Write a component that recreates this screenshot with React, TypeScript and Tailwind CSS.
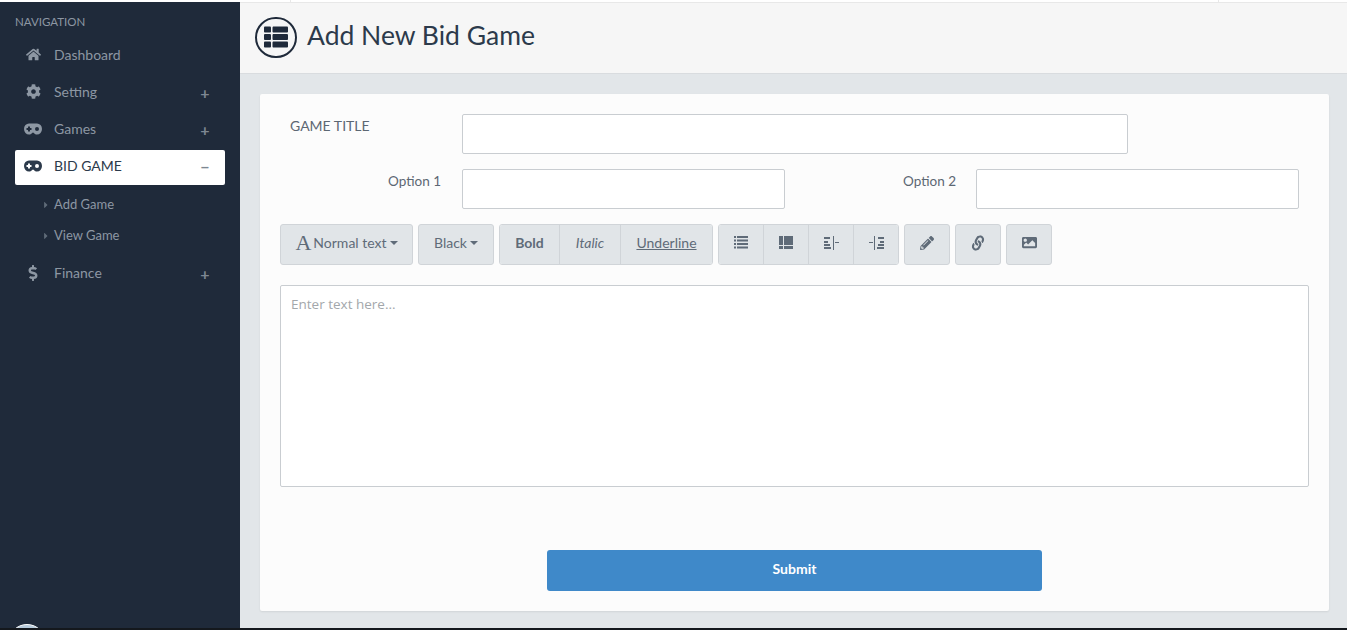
import React from 'react';
import { FaHome, FaCog, FaDollarSign, FaThList, FaPencilAlt, FaLink, FaImage, FaCaretRight } from 'react-icons/fa';

const btn = 'h-full flex items-center justify-center bg-[#e1e5e8] text-[#5f6b78] text-[14px] pb-[4px]';

const GamepadIcon = () => (
  <svg width="18" height="12" viewBox="0 0 18 12" fill="currentColor" fillRule="evenodd">
    <path d="M5 .5h8a5 5.5 0 0 1 0 11c-1.600 0-2.600-.8-3.200-1.800H8.200C7.600 10.700 6.600 11.500 5 11.500a5 5.500 0 0 1 0-11zM4 3.500h2V5h1.500v2H6v1.500H4V7H2.500V5H4zM13 4a2 2 0 1 0 0 4 2 2 0 0 0 0-4z" />
  </svg>
);

const NavItem: React.FC<{ icon: React.ReactNode; label: string; sign?: string; active?: boolean; top?: string }> = ({ icon, label, sign, active, top }) => (
  <div className={`h-[35px] ml-[15px] w-[210px] flex items-center rounded-[2px] ${top ?? 'mt-[2px]'} ${active ? 'bg-white text-[#2c3a4b]' : 'text-[#8d97a3]'}`}>
    <span className="w-[36px] flex justify-center text-[15px] pb-[4px]">{icon}</span>
    <span className="ml-[3px] flex-1 text-[14px] leading-none pb-[4px]">{label}</span>
    {sign && <span className="w-[40px] text-center text-[16px] font-bold text-[#7d8792] pb-[1px] leading-none">{sign}</span>}
  </div>
);

const IndentIcon: React.FC<{ flip?: boolean }> = ({ flip }) => (
  <svg width="15" height="14" viewBox="0 0 15 14" fill="#5f6b78" className={flip ? '-scale-x-100' : ''}>
    <rect x="0" y="1" width="6" height="2" />
    <rect x="0" y="5" width="4" height="2" />
    <rect x="0" y="8" width="6" height="2" />
    <rect x="0" y="11" width="7" height="2" />
    <rect x="9" y="0" width="1" height="14" />
    <rect x="11" y="6" width="4" height="1" />
  </svg>
);

const ListIcon = () => (
  <svg width="14" height="13" viewBox="0 0 14 13" fill="#5f6b78">
    <rect x="0" y="0" width="2" height="2" />
    <rect x="3" y="0" width="11" height="2" />
    <rect x="0" y="3.500" width="2" height="2" />
    <rect x="3" y="3.500" width="11" height="2" />
    <rect x="0" y="7" width="2" height="2" />
    <rect x="3" y="7" width="11" height="2" />
    <rect x="0" y="10.500" width="2" height="2" />
    <rect x="3" y="10.500" width="11" height="2" />
  </svg>
);

const BlockIcon = () => (
  <svg width="14" height="13" viewBox="0 0 14 13" fill="#5f6b78">
    <rect x="0" y="0" width="4" height="9" />
    <rect x="5" y="0" width="9" height="9" />
    <rect x="0" y="10" width="4" height="3" />
    <rect x="5" y="10" width="9" height="3" />
  </svg>
);

const App: React.FC = () => {
  return (
    <div className="h-[630px] w-[1347px] overflow-hidden flex flex-col bg-white font-['Lato','Open_Sans',sans-serif]">
      <div className="h-[2px] shrink-0 bg-white">
        <div className="ml-[290px] w-[929px] h-full border-x border-[#e8e8e8]" />
      </div>
      <div className="flex-1 flex min-h-0">
        <aside className="w-[240px] shrink-0 bg-[#1f2a3a] relative overflow-hidden">
          <div className="pl-[15px] pt-[12px] text-[11.5px] leading-[16px] text-[#8d97a3]">NAVIGATION</div>
          <NavItem icon={<FaHome />} label="Dashboard" top="mt-[9px]" />
          <NavItem icon={<FaCog />} label="Setting" sign="+" />
          <NavItem icon={<GamepadIcon />} label="Games" sign="+" />
          <NavItem icon={<GamepadIcon />} label="BID GAME" sign="−" active />
          <div className="pt-[4px] pb-[4px] text-[13px] text-[#8d97a3]">
            <div className="h-[31px] flex items-center pl-[41px]">
              <span className="w-[13px]"><FaCaretRight className="text-[10px] text-[#5f6b78]" /></span>Add Game
            </div>
            <div className="h-[31px] flex items-center pl-[41px]">
              <span className="w-[13px]"><FaCaretRight className="text-[10px] text-[#5f6b78]" /></span>View Game
            </div>
          </div>
          <NavItem icon={<FaDollarSign className="text-[16px]" />} label="Finance" sign="+" />
          <div className="absolute left-[8px] top-[622px] w-[38px] h-[38px] rounded-full bg-[#b7cbdc] border border-white" />
        </aside>
        <main className="flex-1 min-w-0 bg-[#e2e6e9] flex flex-col">
          <header className="h-[72px] shrink-0 bg-[#f6f6f6] border-t border-t-[#e8e8e8] border-b border-b-[#d9dcdf] flex items-center pl-[15px] pb-[2px]">
            <span className="w-[42px] h-[41px] rounded-full border-2 border-[#1f2a3a] flex items-center justify-center">
              <FaThList className="text-[24px] text-[#1f2a3a]" />
            </span>
            <h1 className="ml-[10px] text-[26.5px] leading-none text-[#2c3a4b] pb-[4px]">Add New Bid Game</h1>
          </header>
          <section className="mt-[20px] ml-[20px] w-[1069px] h-[517px] bg-[#fcfcfc] rounded-[2px] shadow-[0_1px_2px_rgba(0,0,0,0.08)] pt-[20px] px-[20px]">
            <div className="flex">
              <label className="w-[182px] pl-[10px] pt-[3px] text-[14px] leading-[18px] text-[#5c6773]">GAME TITLE</label>
              <div className="w-[666px] h-[40px] bg-white border border-[#c9cdd1] rounded-[2px]" />
            </div>
            <div className="flex mt-[15px]">
              <label className="w-[161px] pt-[3px] text-right text-[13.5px] leading-[18px] text-[#5c6773]">Option 1</label>
              <div className="ml-[21px] w-[323px] h-[40px] bg-white border border-[#c9cdd1] rounded-[2px]" />
              <label className="w-[171px] pt-[3px] text-right text-[13.5px] leading-[18px] text-[#5c6773]">Option 2</label>
              <div className="ml-[20px] w-[323px] h-[40px] bg-white border border-[#c9cdd1] rounded-[2px]" />
            </div>
            <div className="flex h-[41px] mt-[15px] gap-[5px]">
              <div className={`${btn} w-[133px] rounded-[3px] border border-[#d0d4d8]`}>
                <span className="font-['Liberation_Serif',serif] text-[22px] leading-none mr-[2px]">A</span>
                Normal text
                <span className="ml-[3px] mt-[1px] border-x-[4px] border-x-transparent border-t-[4px] border-t-[#5f6b78]" />
              </div>
              <div className={`${btn} w-[76px] rounded-[3px] border border-[#d0d4d8]`}>
                Black
                <span className="ml-[3px] mt-[1px] border-x-[4px] border-x-transparent border-t-[4px] border-t-[#5f6b78]" />
              </div>
              <div className="flex h-full rounded-[3px] border border-[#d0d4d8] divide-x divide-[#d0d4d8] overflow-hidden">
                <div className={`${btn} w-[60px] font-bold`}>Bold</div>
                <div className={`${btn} w-[61px] italic`}>Italic</div>
                <div className={`${btn} w-[91px] underline`}>Underline</div>
              </div>
              <div className="flex h-full rounded-[3px] border border-[#d0d4d8] divide-x divide-[#d0d4d8] overflow-hidden">
                <div className={`${btn} w-[45px]`}><ListIcon /></div>
                <div className={`${btn} w-[45px]`}><BlockIcon /></div>
                <div className={`${btn} w-[45px]`}><IndentIcon /></div>
                <div className={`${btn} w-[44px]`}><IndentIcon flip /></div>
              </div>
              <div className={`${btn} w-[46px] rounded-[3px] border border-[#d0d4d8]`}><FaPencilAlt className="text-[14px]" /></div>
              <div className={`${btn} w-[46px] rounded-[3px] border border-[#d0d4d8]`}><FaLink className="text-[14px] -rotate-[15deg]" /></div>
              <div className={`${btn} w-[46px] rounded-[3px] border border-[#d0d4d8]`}><FaImage className="text-[15px]" /></div>
            </div>
            <div className="mt-[20px] w-[1029px] h-[202px] bg-white border border-[#c9cdd1] rounded-[2px] px-[10px] py-[9px] font-['Open_Sans',sans-serif] text-[13.5px] leading-[18px] text-[#a3a7ab]">
              Enter text here...
            </div>
            <div className="mt-[63px] ml-[267px] w-[495px] h-[41px] bg-[#3f89c9] rounded-[3px] flex items-center justify-center text-white text-[14px] font-bold pb-[5px]">
              Submit
            </div>
          </section>
        </main>
      </div>
      <div className="h-[2px] shrink-0 bg-[#14181d]" />
    </div>
  );
};

export default App;
